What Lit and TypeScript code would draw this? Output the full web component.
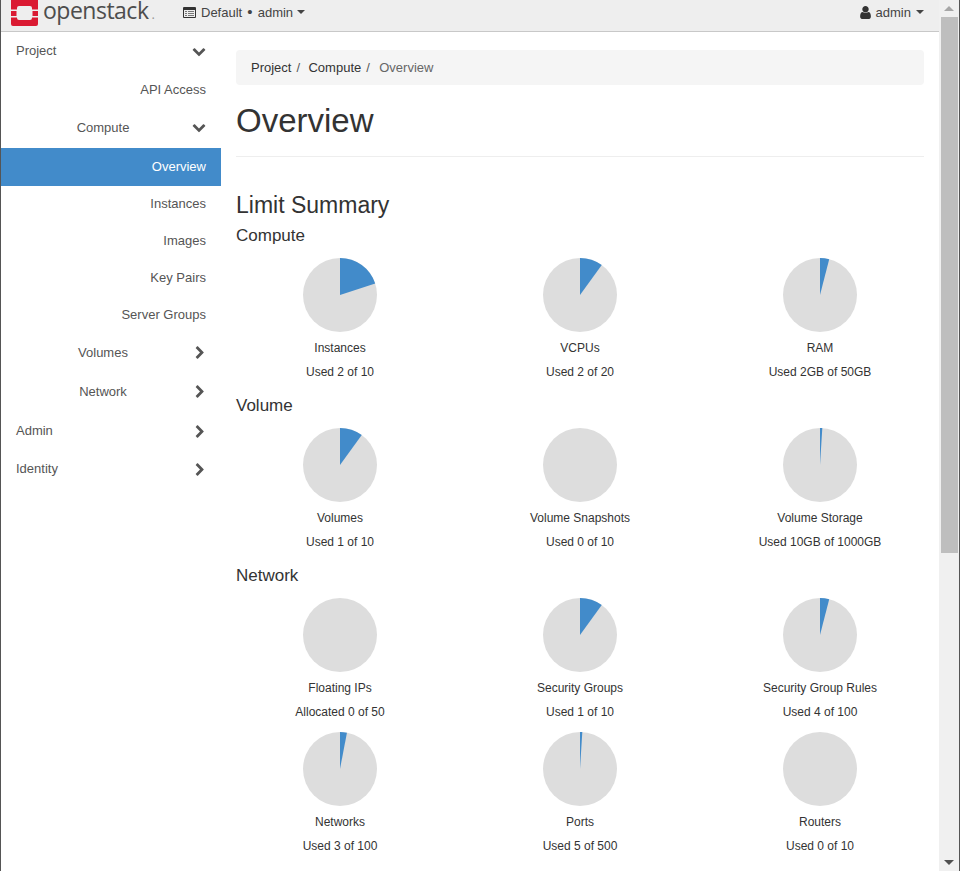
import { LitElement, html, css, svg } from "lit";
import { customElement } from "lit/decorators.js";

const DOWN = "M1683 808l-742 741q-19 19-45 19t-45-19l-742-741q-19-19-19-45.5t19-45.5l166-165q19-19 45-19t45 19l531 531 531-531q19-19 45-19t45 19l166 165q19 19 19 45.5t-19 45.5z";
const RIGHT = "M1363 877l-742 742q-19 19-45 19t-45-19l-166-166q-19-19-19-45t19-45l531-531-531-531q-19-19-19-45t19-45l166-166q19-19 45-19t45 19l742 742q19 19 19 45t-19 45z";
const USER = "M1536 1399q0 109-62.5 187t-150.5 78h-854q-88 0-150.5-78t-62.5-187q0-85 8.5-160.5t31.5-152 58.5-131 94-89 134.5-34.5q131 128 313 128t313-128q76 0 134.5 34.5t94 89 58.5 131 31.5 152 8.5 160.5zm-256-887q0 159-112.5 271.5t-271.5 112.5-271.5-112.5-112.5-271.5 112.5-271.5 271.5-112.5 271.5 112.5 112.5 271.5z";

const icon = (d: string, cls: string) => html`<svg class=${cls} viewBox="0 0 1792 1792"><path d=${d} fill="currentColor"></path></svg>`;

type Nav = { label: string; cls: string; chev?: "d" | "r" };
const NAV: Nav[] = [
  { label: "Project", cls: "top h37", chev: "d" },
  { label: "API Access", cls: "leaf h39 pt2" },
  { label: "Compute", cls: "mid h38 gapb", chev: "d" },
  { label: "Overview", cls: "leaf active pb2" },
  { label: "Instances", cls: "leaf h36 pb2" },
  { label: "Images", cls: "leaf h37" },
  { label: "Key Pairs", cls: "leaf h37" },
  { label: "Server Groups", cls: "leaf h37" },
  { label: "Volumes", cls: "mid h39", chev: "r" },
  { label: "Network", cls: "mid h39", chev: "r" },
  { label: "Admin", cls: "top h38", chev: "r" },
  { label: "Identity", cls: "top h38", chev: "r" },
];

type Pie = { name: string; text: string; pct: number };
const GROUPS: { title?: string; pies: Pie[] }[] = [
  { title: "Compute", pies: [
    { name: "Instances", text: "Used 2 of 10", pct: 20 },
    { name: "VCPUs", text: "Used 2 of 20", pct: 10 },
    { name: "RAM", text: "Used 2GB of 50GB", pct: 4 },
  ]},
  { title: "Volume", pies: [
    { name: "Volumes", text: "Used 1 of 10", pct: 10 },
    { name: "Volume Snapshots", text: "Used 0 of 10", pct: 0 },
    { name: "Volume Storage", text: "Used 10GB of 1000GB", pct: 1 },
  ]},
  { title: "Network", pies: [
    { name: "Floating IPs", text: "Allocated 0 of 50", pct: 0 },
    { name: "Security Groups", text: "Used 1 of 10", pct: 10 },
    { name: "Security Group Rules", text: "Used 4 of 100", pct: 4 },
    { name: "Networks", text: "Used 3 of 100", pct: 3 },
    { name: "Ports", text: "Used 5 of 500", pct: 1 },
    { name: "Routers", text: "Used 0 of 10", pct: 0 },
  ]},
];

function wedge(pct: number) {
  const a = (pct / 100) * 2 * Math.PI;
  const x = 37 + 37 * Math.sin(a);
  const y = 37 - 37 * Math.cos(a);
  return `M37 37 L37 0 A37 37 0 ${pct > 50 ? 1 : 0} 1 ${x.toFixed(2)} ${y.toFixed(2)} Z`;
}

@customElement("app-root")
export class AppRoot extends LitElement {
  static styles = css`
    :host {
      display: flex; width: 960px; height: 871px; overflow: hidden; box-sizing: border-box;
      border-left: 1px solid #555; border-right: 1px solid #555;
      font-family: "Liberation Sans", Arial, sans-serif; font-size: 13px; color: #333; background: #fff;
    }
    .page { flex: 1; min-width: 0; display: flex; flex-direction: column; height: 871px; overflow: hidden; }
    .navbar {
      flex: none; height: 31px; box-sizing: content-box; background: #eee; border-bottom: 1px solid #c8c8c8;
      display: flex; align-items: flex-start; color: #444;
    }
    .logo { display: flex; align-items: flex-start; margin-left: 10px; width: 172px; flex: none; height: 31px; }
    .logo svg { width: 27px; height: 26px; flex: none; display: block; }
    .wordmark { font-family: "Open Sans", sans-serif; font-size: 23px; font-weight: 500; color: #4d4d4d; letter-spacing: -0.5px; margin-left: 5px; line-height: 20px; }
    .wordmark small { font-size: 13px; letter-spacing: 0; color: #999; margin-left: 3px; }
    .project { display: flex; align-items: center; height: 24px; }
    .project svg { width: 13px; height: 11px; margin-right: 5px; display: block; }
    .project .caret { margin-left: 4px; }
    .dot { font-size: 15px; line-height: 13px; margin: 0 1.5px; }
    .caret { display: inline-block; width: 0; height: 0; border-left: 4px solid transparent; border-right: 4px solid transparent; border-top: 4px solid #444; margin-left: 5px; }
    .user { margin-left: auto; margin-right: 15px; display: flex; align-items: center; height: 24px; }
    .user svg { width: 15px; height: 15px; margin-right: 3px; color: #333; }
    .body { flex: 1; display: flex; min-height: 0; }
    nav { flex: none; width: 220px; display: flex; flex-direction: column; color: #555; }
    .row { position: relative; display: flex; align-items: center; box-sizing: border-box; }
    .h36 { height: 36px; } .h37 { height: 37px; } .h38 { height: 38px; } .h39 { height: 39px; }
    .gapb { margin-bottom: 2px; }
    .pt2 { padding-top: 2px; }
    .pb2 { padding-bottom: 2px; }
    .top { padding-left: 15px; }
    .leaf { justify-content: flex-end; padding-right: 15px; }
    .mid { justify-content: center; padding-right: 16px; }
    .active { height: 38px; background: #428bca; color: #fff; }
    .chev { position: absolute; top: 50%; color: #555; width: 14px; height: 14px; margin-top: -7px; }
    .chev.d { left: 191px; }
    .chev.r { left: 192px; }
    .top .chev.r { margin-top: -5.5px; }
    main { flex: 1; min-width: 0; padding: 18px 15px 0; }
    .crumb { height: 35px; box-sizing: border-box; background: #f5f5f5; border-radius: 4px; padding: 0 15px; display: flex; align-items: center; }
    .crumb i { font-style: normal; color: #555; margin: 0 8.4px 0 5px; }
    .crumb .cur { color: #666; margin-left: 1px; }
    h1 { font-size: 33px; font-weight: 400; line-height: 40px; margin: 16px 0 15px; color: #333; }
    .rule { height: 1px; background: #eee; }
    h2 { font-size: 23px; font-weight: 400; line-height: 26px; margin: 35px 0 8px; color: #333; }
    h3 { font-size: 17px; font-weight: 400; line-height: 20px; margin: 0 0 12px; color: #333; }
    .grid { display: grid; grid-template-columns: repeat(3, 1fr); margin: 0 -16px; grid-auto-rows: 134px; }
    .group { height: 170px; }
    .group.big { height: auto; }
    .pie { display: flex; flex-direction: column; align-items: center; font-size: 12px; color: #333; }
    .pie svg { width: 74px; height: 74px; display: block; margin-bottom: 9px; }
    .pie div { line-height: 14px; }
    .pie div + div { margin-top: 10px; }
    .scroll { flex: none; width: 20px; background: #f0f0f0; display: flex; flex-direction: column; align-items: stretch; }
    .arrow { flex: none; height: 17px; display: flex; align-items: center; justify-content: center; }
    .arrow span { width: 0; height: 0; border-left: 5px solid transparent; border-right: 5px solid transparent; }
    .arrow.up span { border-bottom: 5px solid #a6a6a6; }
    .arrow.down span { border-top: 5px solid #505050; }
    .thumb { flex: none; height: 536px; background: #bebebe; margin: 0 1px 0 2px; }
    .track { flex: 1; }
  `;

  render() {
    return html`
      <div class="page">
        <div class="navbar">
          <div class="logo">
            <svg viewBox="11 0 27 26">
              <path fill="#da1a32" d="M11 0H38V9.5H32V8Q32 6 30 6H19Q17 6 17 8V9.5H11Z"></path>
              <path fill="#da1a32" d="M11 11H16.5V16H11ZM32.5 11H38V16H32.5Z"></path>
              <path fill="#da1a32" d="M11 17.5H17V18Q17 20 19 20H30Q32 20 32 18V17.5H38V24Q38 26 36 26H13Q11 26 11 24Z"></path>
            </svg>
            <span class="wordmark">openstack<small>.</small></span>
          </div>
          <div class="project">
            <svg viewBox="0 0 13 11">
              <path fill="#333" fill-rule="evenodd" d="M1 0H12A1 1 0 0 1 13 1V10A1 1 0 0 1 12 11H1A1 1 0 0 1 0 10V1A1 1 0 0 1 1 0ZM1 3V10H12V3Z"></path>
              <path fill="#777" d="M2 4H4V5H2ZM5 4H11V5H5ZM2 6H4V7H2ZM5 6H11V7H5ZM2 8H4V9H2ZM5 8H11V9H5Z"></path>
            </svg>
            <span>Default <span class="dot">•</span> admin</span><span class="caret"></span>
          </div>
          <div class="user">${icon(USER, "")}<span>admin</span><span class="caret"></span></div>
        </div>
        <div class="body">
          <nav>
            ${NAV.map(n => html`<div class="row ${n.cls}"><span>${n.label}</span>${n.chev ? icon(n.chev === "d" ? DOWN : RIGHT, "chev " + n.chev) : ""}</div>`)}
          </nav>
          <main>
            <div class="crumb"><span>Project</span><i>/</i><span>Compute</span><i>/</i><span class="cur">Overview</span></div>
            <h1>Overview</h1>
            <div class="rule"></div>
            <h2>Limit Summary</h2>
            ${GROUPS.map((g, i) => html`
              <div class="group ${i === 2 ? "big" : ""}">
                <h3>${g.title}</h3>
                <div class="grid">
                  ${g.pies.map(p => html`<div class="pie">
                    <svg viewBox="0 0 74 74">
                      <circle cx="37" cy="37" r="37" fill="#ddd"></circle>
                      ${p.pct > 0 ? svg`<path d=${wedge(p.pct)} fill="#428bca"></path>` : ""}
                    </svg>
                    <div>${p.name}</div><div>${p.text}</div>
                  </div>`)}
                </div>
              </div>`)}
          </main>
        </div>
      </div>
      <div class="scroll">
        <div class="arrow up"><span></span></div>
        <div class="thumb"></div>
        <div class="track"></div>
        <div class="arrow down"><span></span></div>
      </div>
    `;
  }
}
